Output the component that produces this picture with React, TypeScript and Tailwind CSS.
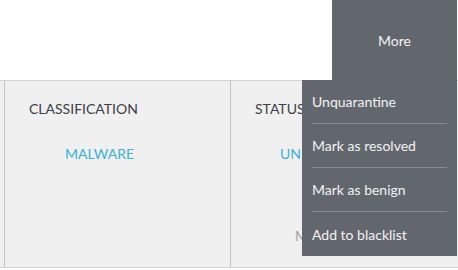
import React from 'react';

const actions = ['Unquarantine', 'Mark as resolved', 'Mark as benign', 'Add to blacklist'];

export default function App() {
  return (
    <div className="relative w-[458px] h-[270px] overflow-hidden bg-white font-['Lato','Liberation_Sans',sans-serif]">
      {/* top bar */}
      <div className="flex h-[80px] justify-end">
        <button className="mr-[1px] flex w-[125px] items-center justify-center bg-[#62676e] text-[14px] text-[#f2f2f2]">
          More
        </button>
      </div>

      {/* details row */}
      <div className="flex h-[188px] border-y border-[#d3d3d3] bg-[#f0f0f0] pl-[4px]">
        <div className="flex w-[227px] flex-col border-x border-[#c4c4c4] pt-[20px]">
          <div className="pl-[24px] text-[14px] leading-[16px] text-[#3c4146]">CLASSIFICATION</div>
          <div className="mt-[29px] pl-[60px] text-[14px] leading-[16px] text-[#3cb1d9]">MALWARE</div>
        </div>
        <div className="flex flex-1 flex-col pt-[20px]">
          <div className="pl-[24px] text-[14px] leading-[16px] text-[#3c4146]">STATUS</div>
          <div className="mt-[29px] pl-[49px] text-[14px] leading-[16px] text-[#3cb1d9]">UNRESOLVED</div>
          <div className="mt-[66px] pl-[64px] text-[14px] leading-[16px] text-[#a0a0a0]">More</div>
        </div>
      </div>

      {/* dropdown */}
      <div className="absolute right-[1px] top-[80px] w-[155px] bg-[#62676e] px-[10px]">
        {actions.map((a, i) => (
          <div
            key={a}
            className={`flex h-[44px] items-center text-[14px] text-[#f2f2f2] ${i < actions.length - 1 ? 'border-b border-[#868b91]' : ''}`}
          >
            {a}
          </div>
        ))}
      </div>
    </div>
  );
}
